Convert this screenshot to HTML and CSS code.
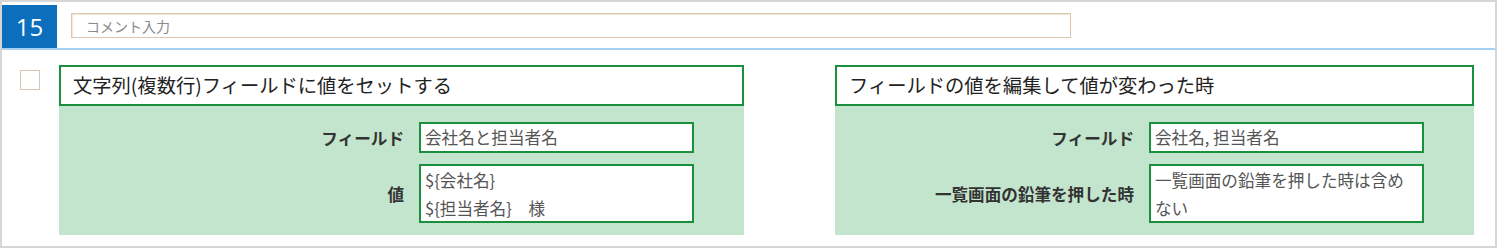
FILE: index.html
```html
<!DOCTYPE html>
<html lang="ja">
<head>
    <meta charset="utf-8">
    <title>Action 15</title>
    <link rel="stylesheet" href="styles.css">
</head>
<body>
    <div class="card">
        <div class="card-head">
            <div class="num">15</div>
            <input class="comment" type="text" placeholder="コメント入力">
        </div>
        <div class="card-body">
            <div class="check"></div>
            <div class="block block-left">
                <div class="block-title">文字列(複数行)フィールドに値をセットする</div>
                <div class="block-body">
                    <div class="label">フィールド</div>
                    <div class="box">会社名と担当者名</div>
                    <div class="label">値</div>
                    <div class="box box-multi">${会社名}<br>${担当者名}　様</div>
                </div>
            </div>
            <div class="block block-right">
                <div class="block-title">フィールドの値を編集して値が変わった時</div>
                <div class="block-body">
                    <div class="label">フィールド</div>
                    <div class="box">会社名, 担当者名</div>
                    <div class="label">一覧画面の鉛筆を押した時</div>
                    <div class="box box-multi">一覧画面の鉛筆を押した時は含め<br>ない</div>
                </div>
            </div>
        </div>
    </div>
</body>
</html>
```

FILE: styles.css
```css
body {
    margin: 0;
    padding: 0;
    background: #fff;
    font-family: "Noto Sans CJK JP", "Noto Sans", sans-serif;
    color: #222;
}
.card {
    width: 1497px;
    height: 248px;
    box-sizing: border-box;
    border: 2px solid #d6d6d6;
    background: #fff;
}
.card-head {
    display: flex;
    align-items: flex-start;
    height: 43px;
    padding-top: 3px;
    border-bottom: 2px solid #a8d0f2;
}
.num {
    width: 55px;
    height: 43px;
    background: #0b6fbd;
    color: #fff;
    font-family: "Open Sans", "Noto Sans", sans-serif;
    font-size: 24px;
    line-height: 43px;
    text-align: center;
}
.comment {
    margin: 8px 0 0 14px;
    width: 1000px;
    height: 25px;
    box-sizing: border-box;
    border: 1px solid #dcc6b1;
    box-shadow: inset 1px 1px 1px #efe5db;
    padding: 0 14px;
    font-family: "Noto Sans CJK JP", sans-serif;
    font-size: 14px;
    color: #555;
    outline: none;
}
.comment::placeholder {
    color: #8a8a8a;
}
.card-body {
    display: flex;
    align-items: flex-start;
    padding-top: 15px;
}
.check {
    width: 20px;
    height: 20px;
    box-sizing: border-box;
    border: 1px solid #d8c4b0;
    margin: 5px 0 0 18px;
}
.block-left {
    width: 685px;
    margin-left: 19px;
}
.block-right {
    width: 639px;
    margin-left: 91px;
}
.block-title {
    height: 41px;
    box-sizing: border-box;
    border: 2px solid #1a8f3d;
    background: #fff;
    padding-left: 12px;
    font-size: 19.3px;
    line-height: 37px;
    color: #222;
}
.block-body {
    background: #c4e5cd;
    height: 129px;
    box-sizing: border-box;
    padding: 16px 50px 12px 0;
    display: grid;
    grid-template-columns: 1fr 275px;
    grid-template-rows: 31px 59px;
    row-gap: 11px;
    column-gap: 15px;
    align-items: center;
}
.label {
    text-align: right;
    font-size: 16.6px;
    font-weight: bold;
    color: #333;
}
.box {
    height: 100%;
    box-sizing: border-box;
    border: 2px solid #1a8f3d;
    background: #fff;
    padding: 0 4px;
    font-size: 16.6px;
    line-height: 27px;
    color: #555;
}
.box-multi {
    padding-top: 0;
    line-height: 28px;
}
```
